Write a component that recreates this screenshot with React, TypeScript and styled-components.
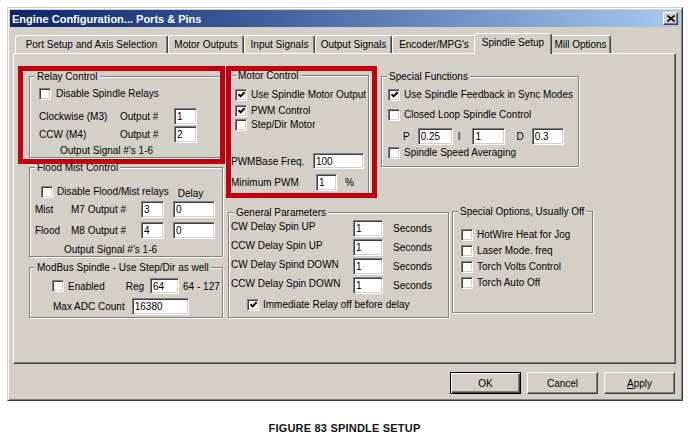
import React from 'react';
import styled, { createGlobalStyle } from 'styled-components';

const GlobalStyle = createGlobalStyle`
  html, body {
    margin: 0;
    padding: 0;
    background: #ffffff;
    overflow: hidden;
  }
  body {
    font-family: "Liberation Sans", Arial, sans-serif;
  }
`;

const Page = styled.div`
  width: 689px;
  height: 435px;
`;

const Dialog = styled.div`
  box-sizing: border-box;
  width: 676px;
  height: 394px;
  margin: 7px 0 0 7px;
  padding: 2px;
  background: #d4d0c8;
  border: 1px solid;
  border-color: #d4d0c8 #404040 #404040 #d4d0c8;
  box-shadow: inset 1px 1px #ffffff, inset -1px -1px #808080;
  display: flex;
  flex-direction: column;
`;

const TitleBar = styled.div`
  height: 17px;
  padding: 0 2px 0 2px;
  background: linear-gradient(90deg, #0a246a 0%, #3a5a98 35%, #a6caf0 100%);
  display: flex;
  align-items: center;
  justify-content: space-between;
`;

const Title = styled.span`
  color: #ffffff;
  font-weight: bold;
  font-size: 11px;
  white-space: nowrap;
`;

const CloseButton = styled.div`
  box-sizing: border-box;
  width: 15px;
  height: 13px;
  background: #d4d0c8;
  border: 1px solid;
  border-color: #ffffff #404040 #404040 #ffffff;
  box-shadow: inset -1px -1px #808080;
  display: flex;
  align-items: center;
  justify-content: center;
`;

const Body = styled.div`
  display: flex;
  flex-direction: column;
  padding: 6px 4px 0 3px;
`;

const TabStrip = styled.div`
  display: flex;
  align-items: flex-end;
  height: 20px;
  padding-left: 2px;
`;

const Tab = styled.div<{ $w: number; $active?: boolean }>`
  position: relative;
  z-index: ${(p) => (p.$active ? 1 : 0)};
  box-sizing: border-box;
  flex: none;
  width: ${(p) => (p.$active ? p.$w + 4 : p.$w)}px;
  height: ${(p) => (p.$active ? 21 : 18)}px;
  margin: 0 ${(p) => (p.$active ? -2 : 0)}px ${(p) => (p.$active ? -1 : 0)}px;
  padding-bottom: ${(p) => (p.$active ? 3 : 0)}px;
  background: #d4d0c8;
  border: 1px solid;
  border-bottom: none;
  border-color: #ffffff #404040 transparent #ffffff;
  border-radius: 3px 3px 0 0;
  box-shadow: inset -1px 0 #808080;
  display: flex;
  align-items: center;
  justify-content: center;
  font-size: 10px;
  white-space: nowrap;
  color: #000;
`;

const Panel = styled.div`
  position: relative;
  box-sizing: border-box;
  height: 311px;
  padding: 21px 0 0 15px;
  border: 1px solid;
  border-color: #ffffff #404040 #404040 #ffffff;
  box-shadow: inset -1px -1px #808080;
  display: flex;
  align-items: flex-start;
`;

const LeftColumn = styled.div`
  display: flex;
  flex-direction: column;
  margin-top: 1px;
`;

const RightArea = styled.div`
  display: flex;
  flex-direction: column;
  margin-left: 5px;
`;

const GroupRow = styled.div<{ $mt?: number }>`
  display: flex;
  align-items: flex-start;
  margin-top: ${(p) => p.$mt ?? 0}px;
`;

const Group = styled.div<{ $w: number; $h: number; $pad: string; $mt?: number; $ml?: number }>`
  position: relative;
  box-sizing: border-box;
  flex: none;
  width: ${(p) => p.$w}px;
  height: ${(p) => p.$h}px;
  margin: ${(p) => p.$mt ?? 0}px 0 0 ${(p) => p.$ml ?? 0}px;
  padding: ${(p) => p.$pad};
  border: 1px solid #808080;
  box-shadow: inset 1px 1px #ffffff, 1px 1px #ffffff;
  display: flex;
  flex-direction: column;
  align-items: flex-start;
  font-size: 10px;
  line-height: 13px;
  color: #000;
`;

const Legend = styled.span`
  position: absolute;
  top: -6px;
  left: 5px;
  padding: 0 2px;
  background: #d4d0c8;
  line-height: 12px;
  white-space: nowrap;
`;

const CheckRow = styled.div<{ $mt?: number; $ml?: number; $gap?: number }>`
  display: flex;
  align-items: center;
  gap: ${(p) => p.$gap ?? 4}px;
  height: 13px;
  max-width: 100%;
  margin: ${(p) => p.$mt ?? 0}px 0 0 ${(p) => p.$ml ?? 0}px;
  overflow: hidden;
  white-space: nowrap;
`;

const Box = styled.span`
  box-sizing: border-box;
  flex: none;
  width: 12px;
  height: 12px;
  background: #ffffff;
  border: 1px solid;
  border-color: #808080 #ffffff #ffffff #808080;
  box-shadow: inset 1px 1px #404040, inset -1px -1px #d4d0c8;
  display: flex;
  align-items: center;
  justify-content: center;
`;

const Row = styled.div<{ $mt?: number; $ml?: number; $h?: number }>`
  display: flex;
  align-items: center;
  height: ${(p) => p.$h ?? 17}px;
  margin: ${(p) => p.$mt ?? 0}px 0 0 ${(p) => p.$ml ?? 0}px;
  white-space: nowrap;
`;

const Text = styled.span<{ $w?: number; $ml?: number; $pt?: number }>`
  flex: none;
  width: ${(p) => (p.$w ? `${p.$w}px` : 'auto')};
  margin-left: ${(p) => p.$ml ?? 0}px;
  padding-top: ${(p) => p.$pt ?? 0}px;
  white-space: nowrap;
`;

const Field = styled.div<{ $w: number; $h?: number; $ml?: number }>`
  box-sizing: border-box;
  flex: none;
  width: ${(p) => p.$w}px;
  height: ${(p) => p.$h ?? 17}px;
  margin-left: ${(p) => p.$ml ?? 0}px;
  padding: 0 2px;
  background: #ffffff;
  border: 1px solid;
  border-color: #808080 #ffffff #ffffff #808080;
  box-shadow: inset 1px 1px #404040, inset -1px -1px #d4d0c8;
  display: flex;
  align-items: center;
  font-size: 10px;
  white-space: nowrap;
`;

const OutputGrid = styled.div<{ $cols: string; $rowGap: number; $mt: number }>`
  display: grid;
  grid-template-columns: ${(p) => p.$cols};
  grid-auto-rows: 17px;
  row-gap: ${(p) => p.$rowGap}px;
  align-items: center;
  margin-top: ${(p) => p.$mt}px;
`;

const ParamGrid = styled.div`
  display: grid;
  grid-template-columns: 122px 30px auto;
  grid-auto-rows: 17px;
  row-gap: 2px;
`;

const ParamLabel = styled.span`
  align-self: start;
  white-space: nowrap;
`;

const Unit = styled.span`
  align-self: center;
  margin-left: 10px;
`;

const Note = styled.div<{ $mt: number; $ml: number }>`
  margin: ${(p) => p.$mt}px 0 0 ${(p) => p.$ml}px;
  white-space: nowrap;
`;

const Highlight = styled.div<{ $x: number; $y: number; $w: number; $h: number }>`
  position: absolute;
  left: ${(p) => p.$x}px;
  top: ${(p) => p.$y}px;
  width: ${(p) => p.$w}px;
  height: ${(p) => p.$h}px;
  box-sizing: border-box;
  border: 5px solid #c0000c;
  pointer-events: none;
`;

const ButtonRow = styled.div`
  display: flex;
  justify-content: flex-end;
  gap: 6px;
  margin-top: 8px;
  padding-right: 1px;
`;

const Button = styled.div<{ $default?: boolean }>`
  box-sizing: border-box;
  width: 71px;
  height: 22px;
  background: #d4d0c8;
  border: 1px solid;
  border-color: ${(p) => (p.$default ? '#000000' : '#ffffff #404040 #404040 #ffffff')};
  box-shadow: ${(p) =>
    p.$default
      ? 'inset 1px 1px #ffffff, inset -1px -1px #404040, inset -2px -2px #808080'
      : 'inset -1px -1px #808080'};
  display: flex;
  align-items: center;
  justify-content: center;
  font-size: 10px;
  color: #000;
`;

const Caption = styled.div`
  margin-top: 20px;
  text-align: center;
  font-family: "Liberation Sans", Arial, sans-serif;
  font-weight: bold;
  font-size: 11px;
  line-height: 14px;
  letter-spacing: 0.2px;
  color: #151515;
`;

const CheckMark = () => (
  <svg width="7" height="7" viewBox="0 0 7 7">
    <polyline points="0.5,3.2 2.6,5.3 6.6,1.2" fill="none" stroke="#000" strokeWidth="1.9" />
  </svg>
);

interface CheckProps {
  label: string;
  checked?: boolean;
  mt?: number;
  ml?: number;
  gap?: number;
}

const Check: React.FC<CheckProps> = ({ label, checked, mt, ml, gap }) => (
  <CheckRow $mt={mt} $ml={ml} $gap={gap}>
    <Box>{checked && <CheckMark />}</Box>
    <span>{label}</span>
  </CheckRow>
);

const tabs = [
  { label: 'Port Setup and Axis Selection', w: 153 },
  { label: 'Motor Outputs', w: 76 },
  { label: 'Input Signals', w: 71 },
  { label: 'Output Signals', w: 77 },
  { label: "Encoder/MPG's", w: 84 },
  { label: 'Spindle Setup', w: 74, active: true },
  { label: 'Mill Options', w: 61 },
];

const delays = ['CW Delay Spin UP', 'CCW Delay Spin UP', 'CW Delay Spind DOWN', 'CCW Delay Spin DOWN'];

const specialOptions = ['HotWire Heat for Jog', 'Laser Mode. freq', 'Torch Volts Control', 'Torch Auto Off'];

export default function App() {
  return (
    <Page>
      <GlobalStyle />
      <Dialog>
        <TitleBar>
          <Title>Engine Configuration... Ports &amp; Pins</Title>
          <CloseButton>
            <svg width="8" height="7" viewBox="0 0 8 7">
              <path d="M0.5 0.5 L7.5 6.5 M7.5 0.5 L0.5 6.5" stroke="#000" strokeWidth="1.6" />
            </svg>
          </CloseButton>
        </TitleBar>

        <Body>
          <TabStrip>
            {tabs.map((t) => (
              <Tab key={t.label} $w={t.w} $active={t.active}>
                {t.label}
              </Tab>
            ))}
          </TabStrip>

          <Panel>
            <LeftColumn>
              <Group $w={194} $h={82} $pad="10px 0 0 9px">
                <Legend>Relay Control</Legend>
                <Check label="Disable Spindle Relays" gap={5} />
                <OutputGrid $cols="81px 54px 23px" $rowGap={1} $mt={8}>
                  <Text>Clockwise (M3)</Text>
                  <Text>Output #</Text>
                  <Field $w={23}>1</Field>
                  <Text>CCW (M4)</Text>
                  <Text>Output #</Text>
                  <Field $w={23}>2</Field>
                </OutputGrid>
                <Note $mt={1} $ml={21}>Output Signal #'s 1-6</Note>
              </Group>

              <Group $w={194} $h={90} $pad="17px 0 0 5px" $mt={9}>
                <Legend>Flood Mist Control</Legend>
                <Row $h={13}>
                  <Check label="Disable Flood/Mist relays" ml={6} />
                  <Text $ml={9} $pt={4}>Delay</Text>
                </Row>
                <OutputGrid $cols="36px 70px 32px 42px" $rowGap={4} $mt={3}>
                  <Text>Mist</Text>
                  <Text>M7 Output #</Text>
                  <Field $w={23}>3</Field>
                  <Field $w={42}>0</Field>
                  <Text>Flood</Text>
                  <Text>M8 Output #</Text>
                  <Field $w={23}>4</Field>
                  <Field $w={42}>0</Field>
                </OutputGrid>
                <Note $mt={4} $ml={29}>Output Signal #'s 1-6</Note>
              </Group>

              <Group $w={194} $h={51} $pad="10px 0 0 22px" $mt={10}>
                <Legend>ModBus Spindle - Use Step/Dir as well</Legend>
                <Row $h={16}>
                  <Check label="Enabled" />
                  <Text $ml={21}>Reg</Text>
                  <Field $w={29} $h={16} $ml={6}>64</Field>
                  <Text $ml={4}>64 - 127</Text>
                </Row>
                <Row $mt={4} $ml={1}>
                  <Text>Max ADC Count</Text>
                  <Field $w={57} $ml={7}>16380</Field>
                </Row>
              </Group>
            </LeftColumn>

            <RightArea>
              <GroupRow>
                <Group $w={139} $h={120} $pad="12px 0 0 4px" $ml={2}>
                  <Legend>Motor Control</Legend>
                  <Check checked label="Use Spindle Motor Output" />
                  <Check checked label="PWM Control" mt={3} />
                  <Check label="Step/Dir Motor" mt={1} />
                  <Row $mt={22} $ml={-4} $h={16}>
                    <Text $w={82}>PWMBase Freq.</Text>
                    <Field $w={51} $h={16}>100</Field>
                  </Row>
                  <Row $mt={5} $ml={-4}>
                    <Text $w={85}>Minimum PWM</Text>
                    <Field $w={21}>1</Field>
                    <Text $ml={8}>%</Text>
                  </Row>
                </Group>

                <Group $w={198} $h={91} $pad="11px 1px 0 6px" $mt={1} $ml={12}>
                  <Legend>Special Functions</Legend>
                  <Check checked label="Use Spindle Feedback in Sync Modes" />
                  <Check label="Closed Loop Spindle Control" mt={7} />
                  <Row $mt={7} $ml={15}>
                    <Text>P</Text>
                    <Field $w={35} $ml={8}>0.25</Field>
                    <Text $ml={5}>I</Text>
                    <Field $w={33} $ml={12}>1</Field>
                    <Text $ml={11}>D</Text>
                    <Field $w={32} $ml={8}>0.3</Field>
                  </Row>
                  <Check label="Spindle Speed Averaging" mt={1} />
                </Group>
              </GroupRow>

              <GroupRow $mt={17}>
                <Group $w={221} $h={106} $pad="7px 0 0 2px">
                  <Legend>General Parameters</Legend>
                  <ParamGrid>
                    {delays.map((d) => (
                      <React.Fragment key={d}>
                        <ParamLabel>{d}</ParamLabel>
                        <Field $w={30}>1</Field>
                        <Unit>Seconds</Unit>
                      </React.Fragment>
                    ))}
                  </ParamGrid>
                  <Check checked label="Immediate Relay off before delay" mt={4} ml={16} />
                </Group>

                <Group $w={141} $h={102} $pad="16px 0 0 8px" $mt={-1} $ml={3}>
                  <Legend>Special Options, Usually Off</Legend>
                  {specialOptions.map((o, i) => (
                    <Check key={o} label={o} mt={i === 0 ? 0 : 3} />
                  ))}
                </Group>
              </GroupRow>
            </RightArea>

            <Highlight $x={4} $y={12} $w={207} $h={98} />
            <Highlight $x={212} $y={12} $w={151} $h={132} />
          </Panel>

          <ButtonRow>
            <Button $default>OK</Button>
            <Button>Cancel</Button>
            <Button>
              <span>
                <u>A</u>pply
              </span>
            </Button>
          </ButtonRow>
        </Body>
      </Dialog>
      <Caption>FIGURE 83 SPINDLE SETUP</Caption>
    </Page>
  );
}
